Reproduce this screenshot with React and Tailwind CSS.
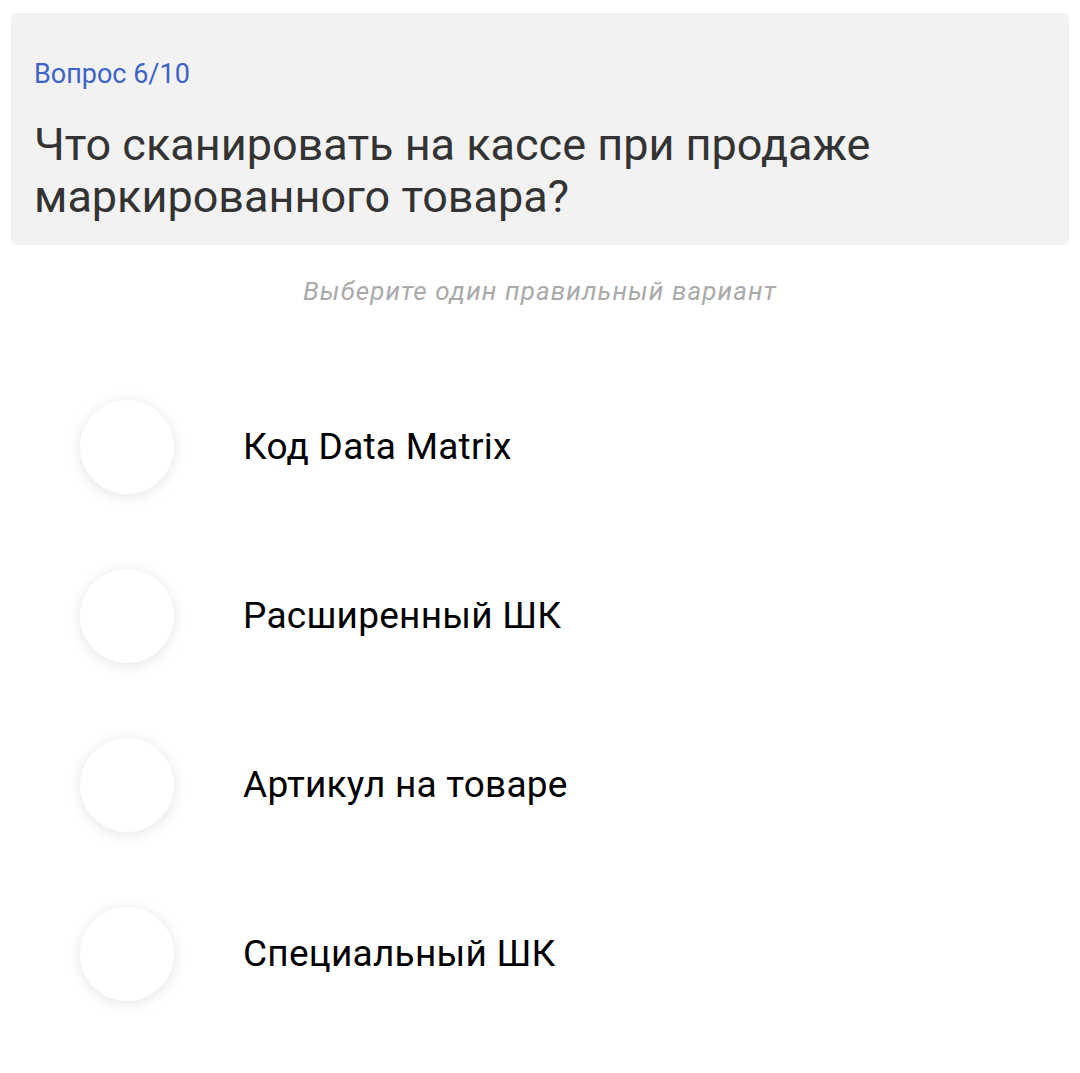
const options = ['Код Data Matrix', 'Расширенный ШК', 'Артикул на товаре', 'Специальный ШК'];

export default function App() {
  return (
    <div className="min-h-screen bg-white font-['Roboto',sans-serif]">
      <div className="px-[11px] pt-[13px]">
        <div className="rounded-md bg-[#f2f2f2] pl-[23px] pr-6 pt-[45px] pb-[22px]">
          <div className="text-[27px] leading-8 text-[#3d63c6]">Вопрос 6/10</div>
          <h1 className="mt-[29px] text-[45px] leading-[52px] text-[#333333]">
            Что сканировать на кассе при продаже
            <br />
            маркированного товара?
          </h1>
        </div>
      </div>

      <p className="mt-8 text-center text-[26px] italic leading-7 tracking-[1.1px] text-[#aaaaaa]">
        Выберите один правильный вариант
      </p>

      <div className="mt-[95px] flex flex-col gap-[75px] pl-20">
        {options.map((label) => (
          <label key={label} className="flex items-center">
            <span className="h-[94px] w-[94px] shrink-0 rounded-full bg-white shadow-[0_2px_14px_rgba(0,0,0,0.11)]" />
            <span className="ml-[69px] text-[37px] leading-10 tracking-[0.25px] text-black">{label}</span>
          </label>
        ))}
      </div>
    </div>
  );
}
